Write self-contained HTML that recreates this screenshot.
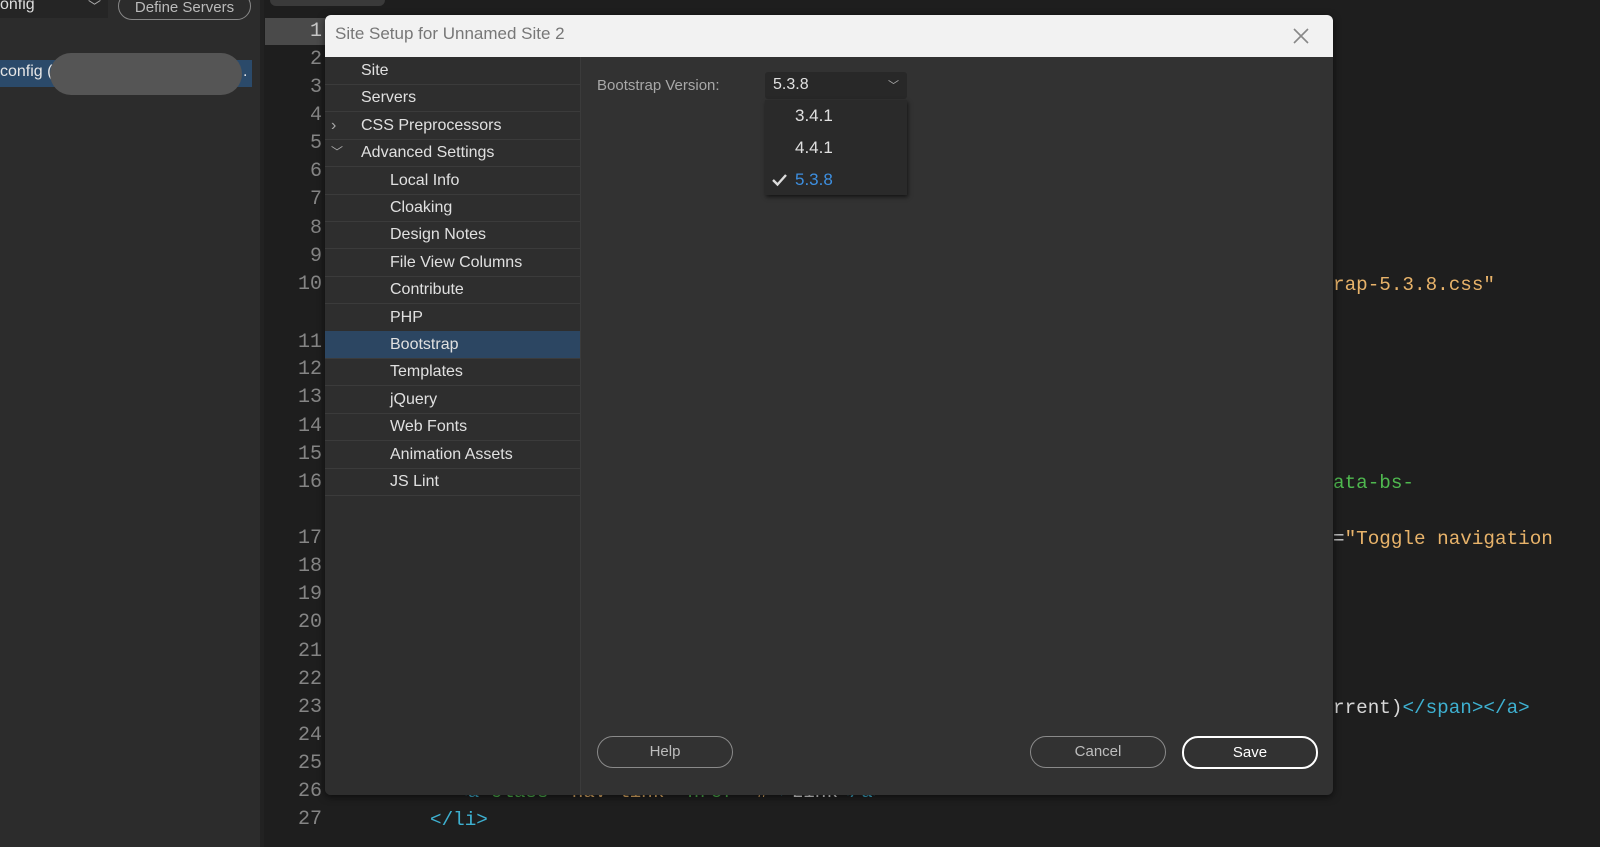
<!DOCTYPE html>
<html><head><style>
body{margin:0;width:1600px;height:847px;overflow:hidden;background:#1e1e1e;position:relative;font-family:"Liberation Sans",sans-serif;}
.a{position:absolute}
.ln{position:absolute;left:265px;width:57px;text-align:right;font:20px "Liberation Mono",monospace;color:#858585;line-height:24px}
.code{position:absolute;font:19.3px "Liberation Mono",monospace;line-height:24px;white-space:pre}
.nav div{position:absolute;left:0;width:255px;height:27px;border-bottom:1px solid #3b3b3b;color:#e0e0e0;font-size:16px;line-height:27px}
.btn{position:absolute;height:30px;border:1px solid #8a8a8a;border-radius:16px;color:#bdbdbd;font-size:15px;text-align:center;line-height:30px}
</style></head><body>
<div class="a" style="left:0;top:0;width:260px;height:847px;background:#2c2c2c"></div>
<div class="a" style="left:260px;top:0;width:4px;height:847px;background:#222"></div>
<div class="a" style="left:0;top:0;width:108px;height:18px;background:#252525"></div>
<div class="a" style="left:0;top:-4px;color:#ddd;font-size:16px">onfig</div>
<div class="a" style="left:88px;top:-4px;color:#aaa;font-size:13px">﹀</div>
<div class="a" style="left:118px;top:-8px;width:131px;height:26px;border:1px solid #888;border-radius:14px;color:#bbb;font-size:15px;text-align:center;line-height:30px">Define Servers</div>
<div class="a" style="left:0;top:60px;width:252px;height:27px;background:#2b4a6a"></div>
<div class="a" style="left:0;top:63px;color:#e6e6e6;font-size:16px">config (</div>
<div class="a" style="left:243px;top:63px;color:#e6e6e6;font-size:16px">.</div>
<div class="a" style="left:50px;top:53px;width:192px;height:42px;background:#555;border-radius:21px"></div>
<div class="a" style="left:270px;top:0;width:115px;height:6px;background:#3a3a3a;border-radius:0 0 8px 8px"></div>
<div class="a" style="left:265px;top:18px;width:60px;height:27px;background:#4a4a4a"></div>

<div class="ln" style="top:20px;color:#c8c8c8">1</div>
<div class="ln" style="top:48px">2</div><div class="ln" style="top:76px">3</div><div class="ln" style="top:104px">4</div>
<div class="ln" style="top:132px">5</div><div class="ln" style="top:160px">6</div><div class="ln" style="top:188px">7</div>
<div class="ln" style="top:217px">8</div><div class="ln" style="top:245px">9</div><div class="ln" style="top:273px">10</div>
<div class="ln" style="top:331px">11</div><div class="ln" style="top:358px">12</div><div class="ln" style="top:386px">13</div>
<div class="ln" style="top:415px">14</div><div class="ln" style="top:443px">15</div><div class="ln" style="top:471px">16</div>
<div class="ln" style="top:527px">17</div><div class="ln" style="top:555px">18</div><div class="ln" style="top:583px">19</div>
<div class="ln" style="top:611px">20</div><div class="ln" style="top:640px">21</div><div class="ln" style="top:668px">22</div>
<div class="ln" style="top:696px">23</div><div class="ln" style="top:724px">24</div><div class="ln" style="top:752px">25</div>
<div class="ln" style="top:780px">26</div><div class="ln" style="top:808px">27</div>

<div class="code" style="left:1333px;top:273px;color:#e8b36a">rap-5.3.8.css"</div>
<div class="code" style="left:1333px;top:471px;color:#4fb84f">ata-bs-</div>
<div class="code" style="left:1333px;top:527px;color:#e8b36a"><span style="color:#ccc">=</span>"Toggle navigation</div>
<div class="code" style="left:1333px;top:696px;color:#d8d8d8">rrent)<span style="color:#3eb0d0">&lt;/span&gt;&lt;/a&gt;</span></div>
<div class="code" style="left:456px;top:780px;color:#3eb0d0">&lt;a <span style="color:#4fb84f">class</span><span style="color:#ccc">=</span><span style="color:#e8b36a">"nav-link"</span> <span style="color:#4fb84f">href</span><span style="color:#ccc">=</span><span style="color:#e8b36a">"#"</span>&gt;<span style="color:#ddd">Link</span>&lt;/a&gt;</div>
<div class="code" style="left:430px;top:808px;color:#3eb0d0">&lt;/li&gt;</div>

<div class="a" style="left:325px;top:15px;width:1008px;height:780px;background:#323232;border-radius:6px;box-shadow:0 2px 8px rgba(0,0,0,.6);overflow:hidden">
 <div class="a" style="left:0;top:0;width:1008px;height:42px;background:#f2f2f2"></div>
 <div class="a" style="left:10px;top:9px;font-size:17px;color:#777">Site Setup for Unnamed Site 2</div>
 <svg class="a" style="left:966px;top:11px" width="20" height="20"><path d="M3 3L17 17M17 3L3 17" stroke="#888" stroke-width="1.6"/></svg>
 <div class="a" style="left:0;top:42px;width:255px;height:738px;background:#2e2e2e;border-right:1px solid #3b3b3b"></div>
 <div class="nav a" style="left:0;top:42px">
  <div style="top:0;padding-left:36px;width:219px">Site</div>
  <div style="top:27.4px;padding-left:36px;width:219px">Servers</div>
  <div style="top:54.8px;padding-left:36px;width:219px"><span style="position:absolute;left:6px;color:#aaa">›</span>CSS Preprocessors</div>
  <div style="top:82.2px;padding-left:36px;width:219px"><span style="position:absolute;left:6px;color:#aaa;font-size:12px">﹀</span>Advanced Settings</div>
  <div style="top:109.6px;padding-left:65px;width:190px">Local Info</div>
  <div style="top:137px;padding-left:65px;width:190px">Cloaking</div>
  <div style="top:164.4px;padding-left:65px;width:190px">Design Notes</div>
  <div style="top:191.8px;padding-left:65px;width:190px">File View Columns</div>
  <div style="top:219.2px;padding-left:65px;width:190px">Contribute</div>
  <div style="top:246.6px;padding-left:65px;width:190px">PHP</div>
  <div style="top:274px;padding-left:65px;width:190px;background:#2c4662">Bootstrap</div>
  <div style="top:301.4px;padding-left:65px;width:190px">Templates</div>
  <div style="top:328.8px;padding-left:65px;width:190px">jQuery</div>
  <div style="top:356.2px;padding-left:65px;width:190px">Web Fonts</div>
  <div style="top:383.6px;padding-left:65px;width:190px">Animation Assets</div>
  <div style="top:411px;padding-left:65px;width:190px">JS Lint</div>
 </div>
 <div class="a" style="left:272px;top:62px;font-size:15px;color:#a8a8a8">Bootstrap Version:</div>
 <div class="a" style="left:440px;top:57px;width:142px;height:27px;background:#282828;border-radius:3px"></div>
 <div class="a" style="left:448px;top:61px;font-size:16px;color:#e0e0e0">5.3.8</div>
 <div class="a" style="left:563px;top:62px;font-size:11px;color:#aaa">﹀</div>
 <div class="a" style="left:440px;top:85px;width:142px;height:95px;background:#2a2a2a;box-shadow:1px 2px 4px rgba(0,0,0,.6)"></div>
 <div class="a" style="left:470px;top:91px;font-size:17px;color:#e0e0e0">3.4.1</div>
 <div class="a" style="left:470px;top:123px;font-size:17px;color:#e0e0e0">4.4.1</div>
 <div class="a" style="left:470px;top:155px;font-size:17px;color:#3d8fe0">5.3.8</div>
 <svg class="a" style="left:446px;top:158px" width="18" height="14"><path d="M2 7L6.5 11.5L15 2" stroke="#ddd" stroke-width="2.4" fill="none"/></svg>
 <div class="btn" style="left:272px;top:721px;width:134px">Help</div>
 <div class="btn" style="left:705px;top:721px;width:134px">Cancel</div>
 <div class="btn" style="left:857px;top:721px;width:132px;border:2px solid #fff;color:#fff;height:29px;line-height:29px">Save</div>
</div>
</body></html>
